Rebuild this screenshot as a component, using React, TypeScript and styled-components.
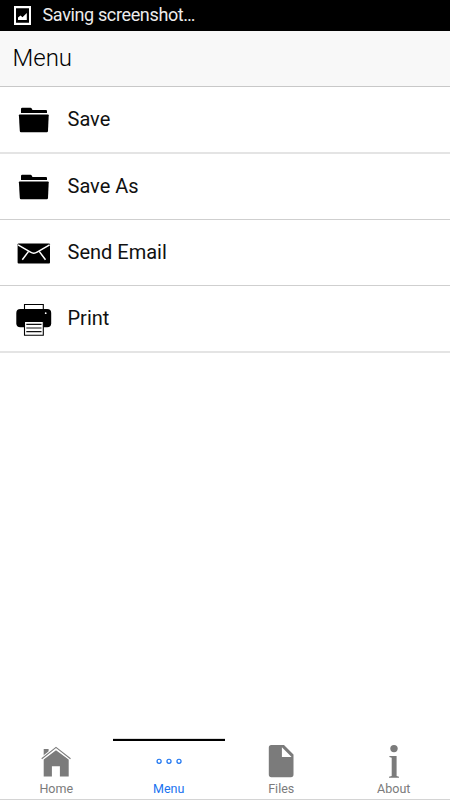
import React from "react";
import styled, { createGlobalStyle } from "styled-components";

const GlobalStyle = createGlobalStyle`
  * { box-sizing: border-box; }
  body { margin: 0; background: #fff; font-family: Roboto, "Noto Sans", sans-serif; }
`;

const Screen = styled.div`
  width: 450px;
  height: 800px;
  display: flex;
  flex-direction: column;
  background: #fff;
  overflow: hidden;
`;

const StatusBar = styled.div`
  height: 31px;
  flex: none;
  display: flex;
  align-items: center;
  padding-left: 14px;
  gap: 11.5px;
  background: #000;
  color: #ececec;
  font-size: 18px;
  letter-spacing: -0.36px;
  line-height: 30px;
  svg { display: block; }
`;

const StatusText = styled.span`
  height: 31px;
`;

const Header = styled.header`
  height: 56px;
  flex: none;
  padding-left: 12.5px;
  background: #f8f8f8;
  border-bottom: 1px solid #c8c8c8;
  color: #000;
  font-size: 24px;
  font-weight: 300;
  line-height: 54px;
`;

const List = styled.ul`
  margin: 0;
  padding: 0;
  list-style: none;
  flex: 1;
`;

const Row = styled.li<{ $thick?: boolean }>`
  height: ${(p) => (p.$thick ? 67 : 66)}px;
  display: flex;
  align-items: center;
  border-bottom: ${(p) => (p.$thick ? "2px solid #e4e4e4" : "1px solid #cfcfcf")};
`;

const RowIcon = styled.span`
  width: 67.5px;
  height: 40px;
  padding-left: 14px;
  svg { display: block; }
`;

const RowLabel = styled.span`
  color: #111;
  font-size: 20px;
  line-height: 24px;
  margin-top: -1px;
`;

const TabBar = styled.nav`
  height: 61px;
  flex: none;
  display: grid;
  grid-template-columns: repeat(4, 1fr);
  border-bottom: 1px solid #d4d4d4;
`;

const Tab = styled.div<{ $active?: boolean }>`
  display: flex;
  flex-direction: column;
  align-items: center;
  border-top: 2px solid ${(p) => (p.$active ? "#000" : "transparent")};
  box-shadow: ${(p) => (p.$active ? "0 -1px 0 #ddd" : "none")};
  color: ${(p) => (p.$active ? "#1a73f0" : "#7b7b7b")};
  svg { display: block; flex: none; }
`;

const TabLabel = styled.span`
  font-size: 12.5px;
  line-height: 16px;
`;

const PictureIcon = () => (
  <svg width="17" height="19" viewBox="0 0 17 19">
    <path fill="#fff" fillRule="evenodd" d="M0 0h17v19H0zM2 2.3v14.4h13V2.3z" />
    <path fill="#fff" d="M4 14V11.5l2.500-2 2 1.700L12.800 7v7z" />
  </svg>
);

const FolderIcon = () => (
  <svg width="40" height="40" viewBox="0 0 40 40">
    <path d="M7 13V9q0-1.200 1.200-1.200h8.300q.8 0 1.200.8l.8 1.400H32q1 0 1 1v2z" />
    <path d="M5.600 14.500h28.400q.7 0 .7.800L34 31q-.1 1.200-1.200 1.200H7Q5.900 32.200 5.800 31L4.900 15.300q0-.8.700-.8z" />
  </svg>
);

const MailIcon = () => (
  <svg width="40" height="40" viewBox="0 0 40 40">
    <rect x="3.6" y="10.4" width="32.4" height="20.2" rx="1" />
    <g fill="none" stroke="#fff" strokeWidth="1.5">
      <path d="M4 11.900l12.500 7.300q3.300 2 6.600 0L35.600 11.900" />
      <path d="M14.600 18.400L8.300 26.700M25.200 18.400l6.300 8.300" />
    </g>
  </svg>
);

const PrinterIcon = () => (
  <svg width="40" height="40" viewBox="0 0 40 40">
    <path d="M10.500 14V5.500h18.800V14" fill="#fff" stroke="#000" strokeWidth="1.1" />
    <rect x="2.3" y="10" width="34.9" height="18.3" rx="4" />
    <circle cx="31.700" cy="14.200" r=".9" fill="#fff" />
    <path d="M10.500 22.400h18.800v13.900H10.500z" fill="#fff" stroke="#000" strokeWidth="1.1" />
    <path d="M12.300 25.400h15.200M12.300 29h15.200M12.300 32.600h15.200" stroke="#111" strokeWidth="1.1" />
  </svg>
);

const HomeIcon = () => (
  <svg width="32" height="40" viewBox="0 0 32 40" fill="currentColor">
    <path d="M3.700 8H8.600v4.500L3.700 17z" />
    <path d="M3.700 18.500L16 9.200l12.700 9.300v16.900h-8.800V25.300h-8V35.400H3.700z" />
    <path d="M1.700 17.700L16 6.300 30.500 17.700" fill="none" stroke="#fff" strokeWidth="3" />
    <path d="M1.700 17.700L16 6.400 30.500 17.700" fill="none" stroke="currentColor" strokeWidth="1.100" />
  </svg>
);

const DotsIcon = () => (
  <svg width="32" height="40" viewBox="0 0 32 40" fill="none" stroke="currentColor" strokeWidth="1.200">
    <circle cx="6.100" cy="20.300" r="2.050" />
    <circle cx="16" cy="20.300" r="2.050" />
    <circle cx="26" cy="20.300" r="2.050" />
  </svg>
);

const FileIcon = () => (
  <svg width="32" height="40" viewBox="0 0 32 40" fill="currentColor">
    <path
      fillRule="evenodd"
      d="M6.300 4h12.700L28.500 13.500v20.100q0 2.600-2.600 2.600H6.400q-2.600 0-2.600-2.600V6.500Q3.800 4 6.300 4zM16.900 6.200v9.700h9.700z"
    />
  </svg>
);

const InfoIcon = () => (
  <svg width="32" height="40" viewBox="0 0 32 40" fill="currentColor">
    <circle cx="16" cy="7.600" r="3.700" />
    <path d="M11.400 15h7.200v20.100l2.400.7V36.700H11v-.9l2.700-.7V16.800l-2.300-.8z" />
  </svg>
);

const rows = [
  { label: "Save", Icon: FolderIcon, thick: true },
  { label: "Save As", Icon: FolderIcon },
  { label: "Send Email", Icon: MailIcon },
  { label: "Print", Icon: PrinterIcon, thick: true },
];

const tabs = [
  { label: "Home", Icon: HomeIcon },
  { label: "Menu", Icon: DotsIcon, active: true },
  { label: "Files", Icon: FileIcon },
  { label: "About", Icon: InfoIcon },
];

export default function App() {
  return (
    <Screen>
      <GlobalStyle />
      <StatusBar>
        <PictureIcon />
        <StatusText>Saving screenshot…</StatusText>
      </StatusBar>
      <Header>Menu</Header>
      <List>
        {rows.map(({ label, Icon, thick }) => (
          <Row key={label} $thick={thick}>
            <RowIcon><Icon /></RowIcon>
            <RowLabel>{label}</RowLabel>
          </Row>
        ))}
      </List>
      <TabBar>
        {tabs.map(({ label, Icon, active }) => (
          <Tab key={label} $active={active}>
            <Icon />
            <TabLabel>{label}</TabLabel>
          </Tab>
        ))}
      </TabBar>
    </Screen>
  );
}
